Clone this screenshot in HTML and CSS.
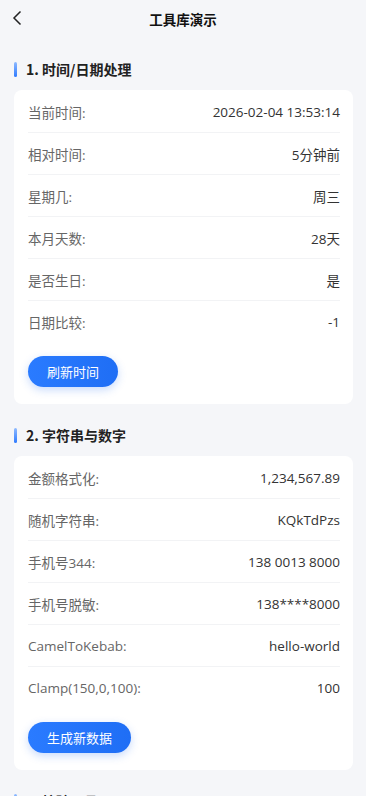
FILE: index.html
```html
<!DOCTYPE html>
<html lang="zh-CN">
<head>
  <meta charset="UTF-8">
  <title>工具库演示</title>
  <link rel="stylesheet" href="styles.css">
</head>
<body>
  <header class="nav-bar">
    <span class="back-btn">
      <svg width="12" height="16" viewBox="0 0 12 16"><path d="M9.5 1.5 L3 8 L9.5 14.5" fill="none" stroke="#222" stroke-width="1.5"/></svg>
    </span>
    <h1>工具库演示</h1>
  </header>

  <main class="page">
    <section class="block">
      <h2 class="block-title">1. 时间/日期处理</h2>
      <div class="card">
        <div class="row"><span class="label">当前时间:</span><span class="value">2026-02-04 13:53:14</span></div>
        <div class="row"><span class="label">相对时间:</span><span class="value">5分钟前</span></div>
        <div class="row"><span class="label">星期几:</span><span class="value">周三</span></div>
        <div class="row"><span class="label">本月天数:</span><span class="value">28天</span></div>
        <div class="row"><span class="label">是否生日:</span><span class="value">是</span></div>
        <div class="row"><span class="label">日期比较:</span><span class="value">-1</span></div>
        <button class="btn">刷新时间</button>
      </div>
    </section>

    <section class="block">
      <h2 class="block-title">2. 字符串与数字</h2>
      <div class="card">
        <div class="row"><span class="label">金额格式化:</span><span class="value">1,234,567.89</span></div>
        <div class="row"><span class="label">随机字符串:</span><span class="value">KQkTdPzs</span></div>
        <div class="row"><span class="label">手机号344:</span><span class="value">138 0013 8000</span></div>
        <div class="row"><span class="label">手机号脱敏:</span><span class="value">138****8000</span></div>
        <div class="row"><span class="label">CamelToKebab:</span><span class="value">hello-world</span></div>
        <div class="row"><span class="label">Clamp(150,0,100):</span><span class="value">100</span></div>
        <button class="btn">生成新数据</button>
      </div>
    </section>

    <section class="block">
      <h2 class="block-title">3. 校验工具</h2>
      <div class="card">
        <div class="row"><span class="label">手机号:</span><span class="value">通过</span></div>
      </div>
    </section>
  </main>
</body>
</html>
```

FILE: styles.css
```css
body {
  margin: 0;
  background: #f5f6f9;
  font-family: "Noto Sans CJK SC", "Noto Sans", sans-serif;
  color: #333;
}
.nav-bar {
  height: 38px;
  display: flex;
  align-items: center;
  justify-content: center;
  position: relative;
}
.nav-bar h1 {
  margin: 0;
  font-size: 13.5px;
  font-weight: bold;
  color: #111;
}
.back-btn {
  position: absolute;
  left: 11px;
  top: 10px;
  display: flex;
}
.page {
  padding: 0 13px 0 14px;
}
.block-title {
  margin: 21px 0 11px;
  font-size: 14px;
  line-height: 20px;
  font-weight: bold;
  color: #222;
  display: flex;
  align-items: center;
}
.block-title::before {
  content: "";
  width: 3px;
  height: 15px;
  border-radius: 2px;
  background: linear-gradient(#8fbaff, #2f7bff);
  margin-right: 9px;
}
.card {
  background: #fff;
  border-radius: 8px;
  padding: 1px 13px 17px 14px;
}
.row {
  height: 42px;
  display: flex;
  align-items: center;
  justify-content: space-between;
  font-family: "Open Sans", "Noto Sans CJK SC", sans-serif;
  font-size: 13.5px;
  border-bottom: 1px solid #f2f3f5;
  box-sizing: border-box;
}
.row:nth-last-of-type(1) {
  border-bottom: none;
}
.label {
  color: #666;
}
.value {
  color: #333;
}
.btn {
  display: block;
  margin-top: 13px;
  height: 31px;
  padding: 0 19px;
  border: none;
  border-radius: 16px;
  background: linear-gradient(90deg, #2a7bff, #1f6ef5);
  color: #fff;
  font-family: inherit;
  font-size: 13px;
  box-shadow: 0 3px 8px rgba(40, 110, 245, 0.25);
}
```
